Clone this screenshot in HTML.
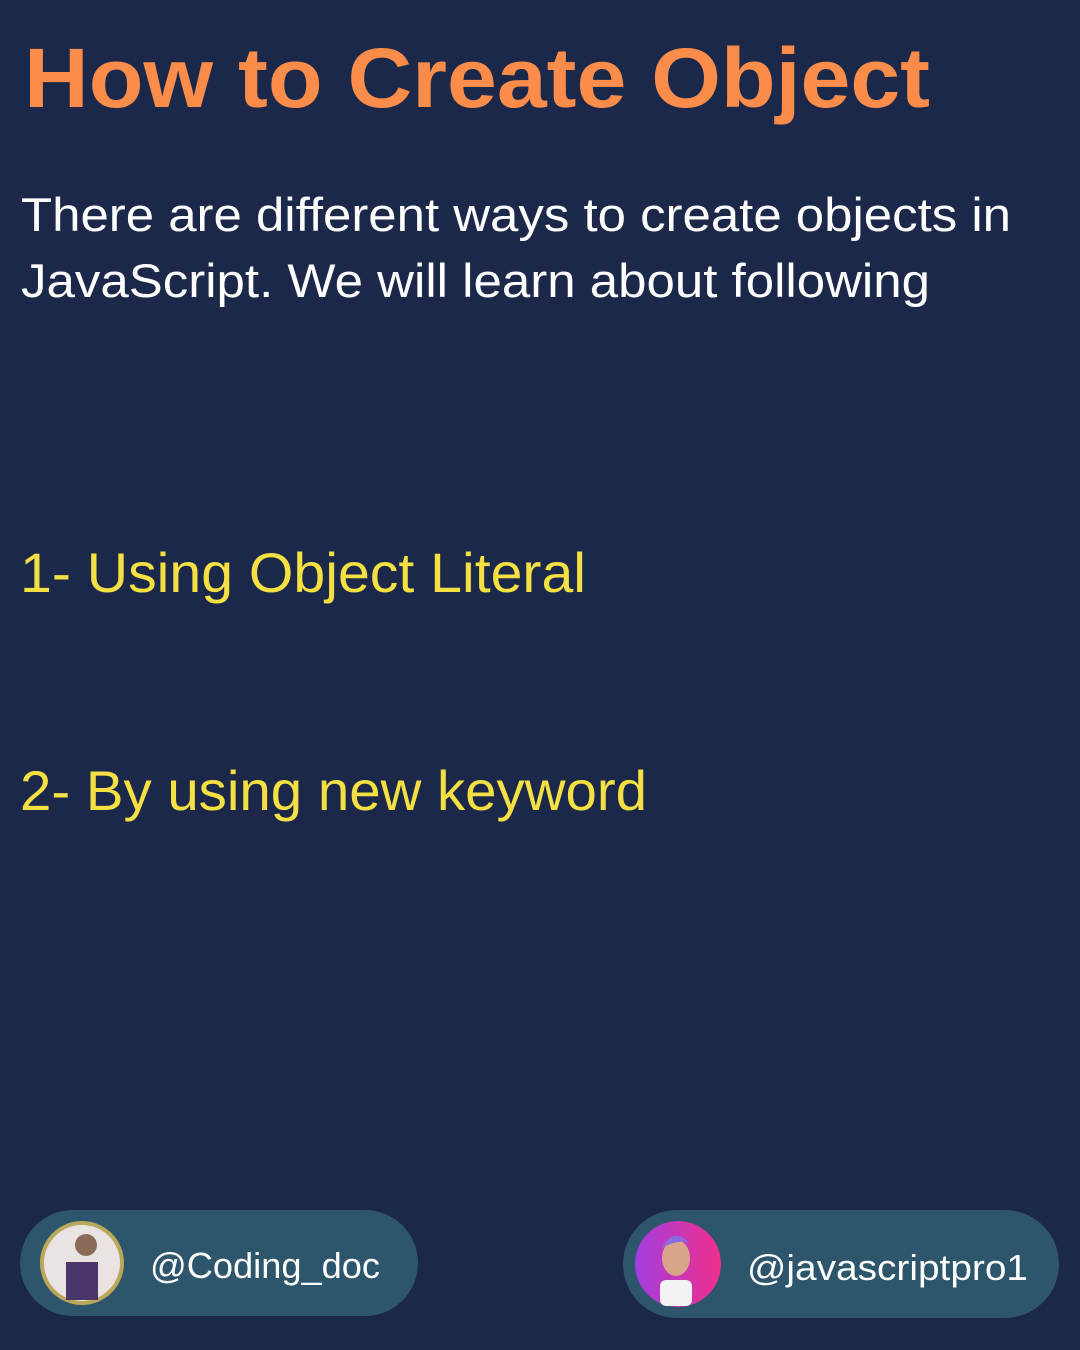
<!DOCTYPE html>
<html><head><meta charset="utf-8"><style>
html,body{margin:0;padding:0;background:#1b284a;}
svg{display:block}
</style></head><body>
<svg width="1080" height="1350" viewBox="0 0 1080 1350" xmlns="http://www.w3.org/2000/svg">
<rect width="1080" height="1350" fill="#1b284a"/>
<g font-family="'Liberation Sans', sans-serif">
<text x="24" y="107" font-size="84" font-weight="bold" fill="#fb8c4a" textLength="906" lengthAdjust="spacingAndGlyphs">How to Create Object</text>
<text x="21" y="231" font-size="47" fill="#ffffff" textLength="990" lengthAdjust="spacingAndGlyphs">There are different ways to create objects in</text>
<text x="21" y="297" font-size="47" fill="#ffffff" textLength="909" lengthAdjust="spacingAndGlyphs">JavaScript. We will learn about following</text>
<text x="20" y="592" font-size="56" fill="#f4e042" textLength="566" lengthAdjust="spacingAndGlyphs">1- Using Object Literal</text>
<text x="20" y="810" font-size="56" fill="#f4e042" textLength="627" lengthAdjust="spacingAndGlyphs">2- By using new keyword</text>
<rect x="20" y="1210" width="398" height="106" rx="53" fill="#2d566c"/>
<rect x="623" y="1210" width="436" height="108" rx="54" fill="#2d566c"/>
<circle cx="82" cy="1263" r="42" fill="#b9a85a"/>
<circle cx="82" cy="1263" r="38" fill="#e9e4e2"/>
<rect x="66" y="1262" width="32" height="38" fill="#4a3668"/>
<circle cx="86" cy="1245" r="11" fill="#8a6a58"/>
<defs><linearGradient id="g" x1="0" y1="0" x2="1" y2="0"><stop offset="0" stop-color="#a23ee0"/><stop offset="1" stop-color="#f0308a"/></linearGradient></defs>
<circle cx="678" cy="1264" r="43" fill="url(#g)"/>
<ellipse cx="676" cy="1258" rx="14" ry="18" fill="#d9a58a"/>
<path d="M662 1248 q12 -22 28 -4 q-10 -6 -28 4z" fill="#8b6ce0"/>
<rect x="660" y="1280" width="32" height="26" rx="6" fill="#f2f2f2"/>
<text x="150" y="1278" font-size="36" fill="#ffffff" textLength="230" lengthAdjust="spacingAndGlyphs">@Coding_doc</text>
<text x="747" y="1280" font-size="36" fill="#ffffff" textLength="281" lengthAdjust="spacingAndGlyphs">@javascriptpro1</text>
</g>
</svg>
</body></html>
